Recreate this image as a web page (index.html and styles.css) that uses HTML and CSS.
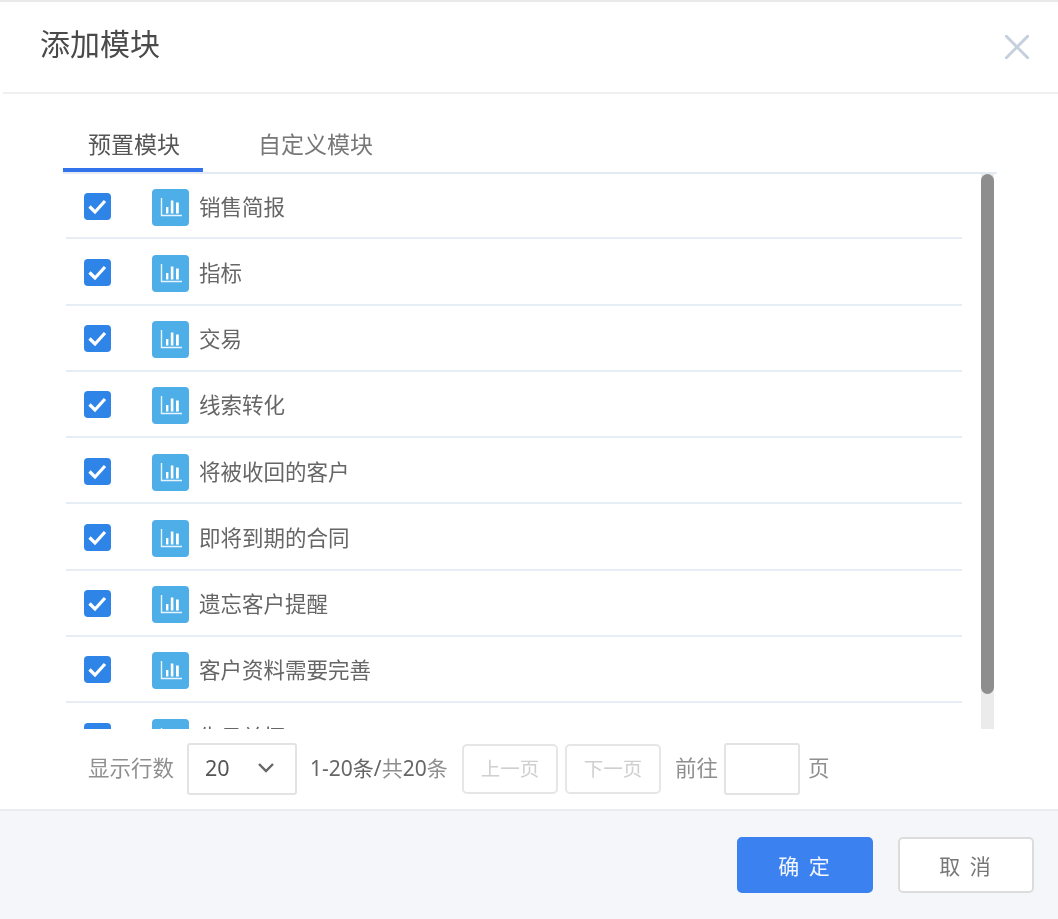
FILE: index.html
```html
<!DOCTYPE html>
<html lang="zh-CN">

<head>
    <meta charset="UTF-8">
    <title>添加模块</title>
    <link rel="stylesheet" href="styles.css">
</head>

<body>
    <svg class="sprite" width="0" height="0">
        <symbol id="chart" viewBox="0 0 37 37">
            <rect width="37" height="37" rx="4" fill="#4eaee8" />
            <path d="M9.5 9V26.5H30" fill="none" stroke="#e6f4fc" stroke-width="1.4" />
            <rect x="14" y="18" width="2.4" height="6.5" fill="#fff" />
            <rect x="18.8" y="11.5" width="2.6" height="13" fill="#fff" />
            <rect x="24" y="13.5" width="2.8" height="11" fill="#fff" />
        </symbol>
        <symbol id="tick" viewBox="0 0 27 27">
            <rect width="27" height="27" rx="4" fill="#2f84e8" />
            <path d="M5.5 13.5L11 19L21 8" fill="none" stroke="#fff" stroke-width="3.2" />
        </symbol>
    </svg>

    <div class="dialog">
        <div class="header">
            <div class="title">添加模块</div>
            <svg class="close" width="24" height="24" viewBox="0 0 24 24">
                <path d="M1 1L23 23M23 1L1 23" stroke="#c5cfdd" stroke-width="3" stroke-linecap="round" />
            </svg>
        </div>

        <div class="content">
            <div class="tabs">
                <div class="tab active">预置模块</div>
                <div class="tab">自定义模块</div>
            </div>

            <div class="list-wrap">
                <div class="list">
                    <div class="row"><svg class="check"><use href="#tick" /></svg><svg class="icon"><use href="#chart" /></svg><span>销售简报</span></div>
                    <div class="row"><svg class="check"><use href="#tick" /></svg><svg class="icon"><use href="#chart" /></svg><span>指标</span></div>
                    <div class="row"><svg class="check"><use href="#tick" /></svg><svg class="icon"><use href="#chart" /></svg><span>交易</span></div>
                    <div class="row"><svg class="check"><use href="#tick" /></svg><svg class="icon"><use href="#chart" /></svg><span>线索转化</span></div>
                    <div class="row"><svg class="check"><use href="#tick" /></svg><svg class="icon"><use href="#chart" /></svg><span>将被收回的客户</span></div>
                    <div class="row"><svg class="check"><use href="#tick" /></svg><svg class="icon"><use href="#chart" /></svg><span>即将到期的合同</span></div>
                    <div class="row"><svg class="check"><use href="#tick" /></svg><svg class="icon"><use href="#chart" /></svg><span>遗忘客户提醒</span></div>
                    <div class="row"><svg class="check"><use href="#tick" /></svg><svg class="icon"><use href="#chart" /></svg><span>客户资料需要完善</span></div>
                    <div class="row"><svg class="check"><use href="#tick" /></svg><svg class="icon"><use href="#chart" /></svg><span>生日关怀</span></div>
                </div>
                <div class="scrollbar">
                    <div class="thumb"></div>
                </div>
            </div>

            <div class="pager">
                <span class="label">显示行数</span>
                <div class="select">
                    <span>20</span>
                    <svg width="18" height="11" viewBox="0 0 18 11">
                        <path d="M2 2L9 9L16 2" fill="none" stroke="#666" stroke-width="2.4" />
                    </svg>
                </div>
                <span class="count">1-20条/<span class="label">共</span>20<span class="label">条</span></span>
                <button class="page-btn">上一页</button>
                <button class="page-btn">下一页</button>
                <span class="label goto">前往</span>
                <input class="page-input" type="text">
                <span class="label">页</span>
            </div>
        </div>

        <div class="footer">
            <button class="btn primary">确 定</button>
            <button class="btn">取 消</button>
        </div>
    </div>
</body>

</html>
```

FILE: styles.css
```css
* {
    box-sizing: border-box;
}

body {
    margin: 0;
    background-color: #fff;
    font-family: "Noto Sans", "Noto Sans CJK SC", sans-serif;
    color: #666;
}

.sprite {
    display: block;
    height: 0;
}

.dialog {
    display: flex;
    flex-direction: column;
    height: 919px;
    border-top: 2px solid #e9e9e9;
    filter: blur(0.6px);
}

.header {
    display: flex;
    justify-content: space-between;
    align-items: center;
    height: 92px;
    margin-left: 3px;
    padding: 0 29px 6px 37px;
    border-bottom: 2px solid #eff0f2;
}

.title {
    font-size: 30px;
    line-height: 40px;
    color: #4a4a4a;
}

.close {
    margin-top: 6px;
}

.content {
    flex: 1;
    padding: 0 61px 0 63px;
}

.tabs {
    display: flex;
    height: 80px;
    padding-top: 33px;
    border-bottom: 2px solid #e3eaf3;
}

.tab {
    width: 140px;
    height: 45px;
    margin-right: 30px;
    padding-left: 25px;
    font-size: 23px;
    line-height: 34px;
    white-space: nowrap;
    color: #777;
}

.tab.active {
    border-bottom: 4px solid #3273ec;
    color: #555;
}

.list-wrap {
    display: flex;
    justify-content: space-between;
    height: 555px;
    padding-right: 3px;
}

.list {
    width: 896px;
    height: 556px;
    margin: -1px 0 0 3px;
    overflow: hidden;
}

.row {
    display: flex;
    align-items: center;
    height: 66.25px;
    padding-left: 18px;
    border-bottom: 2px solid #e6edf5;
    font-size: 21.5px;
    color: #666;
}

.check {
    width: 27px;
    height: 27px;
    margin: 2px 41px 0 0;
}

.icon {
    width: 37px;
    height: 37px;
    margin: 4px 10px 0 0;
}

.scrollbar {
    width: 13px;
    background-color: #ebebeb;
}

.thumb {
    height: 520px;
    border-radius: 7px;
    background-color: #8e8e8e;
}

.pager {
    display: flex;
    align-items: center;
    height: 80px;
    padding-left: 25px;
    font-size: 21.5px;
    line-height: 30px;
}

.pager > span {
    margin-bottom: 3px;
}

.label {
    color: #8f8f8f;
}

.select {
    display: flex;
    justify-content: space-between;
    align-items: center;
    width: 110px;
    height: 52px;
    margin: 0 13px;
    padding: 0 20px 3px 16px;
    border: 2px solid #e3e3e3;
    border-radius: 3px;
    color: #555;
}

.count {
    width: 152px;
    font-size: 21px;
    white-space: nowrap;
    color: #666;
}

.page-btn {
    width: 96px;
    height: 50px;
    margin-right: 7px;
    padding: 0 0 3px;
    border: 2px solid #e6e6e6;
    border-radius: 5px;
    background-color: #fff;
    font-family: inherit;
    font-size: 19.5px;
    color: #cfcfcf;
}

.goto {
    margin-left: 7px;
}

.page-input {
    width: 76px;
    height: 52px;
    margin: 0 8px 0 6px;
    border: 2px solid #e3e3e3;
    border-radius: 3px;
}

.footer {
    display: flex;
    justify-content: flex-end;
    align-items: center;
    gap: 25px;
    height: 110px;
    padding-right: 24px;
    border-top: 2px solid #e9ecf1;
    background-color: #f4f6fa;
}

.btn {
    width: 136px;
    height: 56px;
    padding: 0;
    border: 2px solid #dcdcdc;
    border-radius: 5px;
    background-color: #fff;
    font-family: inherit;
    font-size: 21px;
    letter-spacing: 2px;
    color: #777;
}

.btn.primary {
    border-color: #3b81ef;
    background-color: #3b81ef;
    color: #f2f7ff;
}
```
